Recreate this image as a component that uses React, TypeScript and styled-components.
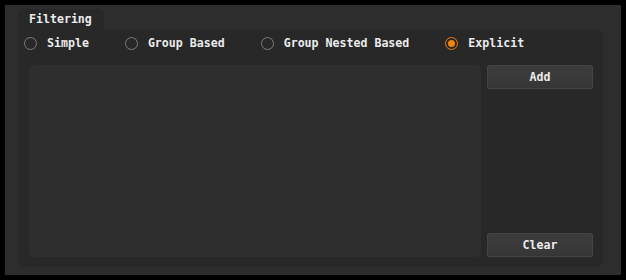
import React, { useState } from 'react'
import styled, { createGlobalStyle } from 'styled-components';

const GlobalStyle = createGlobalStyle`
  html, body {
    margin: 0;
    padding: 0;
    background-color: #000000;
  }
`;

const Window = styled.div`
  box-sizing: border-box;
  margin: 5px;
  width: 616px;
  height: 270px;
  background-color: #2d2d2d;
  padding: 4px 18px 8px 13px;
  display: flex;
  flex-direction: column;
  font-family: "DejaVu Sans Mono", "Liberation Mono", monospace;
  font-weight: bold;
  font-size: 11.6px;
  color: #ececec;
`;

const Tab = styled.div`
  align-self: flex-start;
  box-sizing: border-box;
  width: 86px;
  height: 21px;
  padding-left: 11px;
  padding-bottom: 2px;
  display: flex;
  align-items: center;
  background-color: #282828;
  border-radius: 6px 6px 0 0;
`;

const Panel = styled.div`
  flex: 1;
  display: flex;
  flex-direction: column;
  background-color: #282828;
  border-radius: 0 6px 6px 6px;
  padding: 0 10px 10px 6px;
`;

const RadioRow = styled.div`
  height: 35px;
  display: flex;
  align-items: center;
  gap: 36px;
  padding-bottom: 9px;
  box-sizing: border-box;
`;

const RadioOption = styled.label`
  display: flex;
  align-items: center;
  gap: 10px;
  cursor: pointer;
`;

const RadioCircle = styled.span<{ $checked: boolean }>`
  box-sizing: border-box;
  width: 13px;
  height: 13px;
  border-radius: 50%;
  border: 1.5px solid ${p => (p.$checked ? '#f07c14' : '#7e7e7e')};
  display: flex;
  align-items: center;
  justify-content: center;

  &::after {
    content: '';
    display: ${p => (p.$checked ? 'block' : 'none')};
    width: 7px;
    height: 7px;
    border-radius: 50%;
    background-color: #f5820f;
  }
`;

const Body = styled.div`
  flex: 1;
  display: flex;
  gap: 6px;
  padding-left: 5px;
`;

const ListArea = styled.div`
  flex: 1;
  background-color: #2e2e2e;
  border-radius: 5px;
`;

const ButtonColumn = styled.div`
  width: 106px;
  display: flex;
  flex-direction: column;
  justify-content: space-between;
`;

const Button = styled.button`
  box-sizing: border-box;
  height: 24px;
  width: 100%;
  border: 1px solid #444444;
  border-radius: 2px;
  background: linear-gradient(to bottom, #3d3d3d, #363636);
  color: #ececec;
  font-family: inherit;
  font-weight: bold;
  font-size: 11.6px;
  padding: 0;
`;

const options = ['Simple', 'Group Based', 'Group Nested Based', 'Explicit'];

export default function App() {
  const [selected, setSelected] = useState('Explicit');

  return (
    <>
      <GlobalStyle />
      <Window>
        <Tab>Filtering</Tab>
        <Panel>
          <RadioRow>
            {options.map(opt => (
              <RadioOption key={opt} onClick={() => setSelected(opt)}>
                <RadioCircle $checked={selected === opt} />
                {opt}
              </RadioOption>
            ))}
          </RadioRow>
          <Body>
            <ListArea />
            <ButtonColumn>
              <Button>Add</Button>
              <Button>Clear</Button>
            </ButtonColumn>
          </Body>
        </Panel>
      </Window>
    </>
  )
}
